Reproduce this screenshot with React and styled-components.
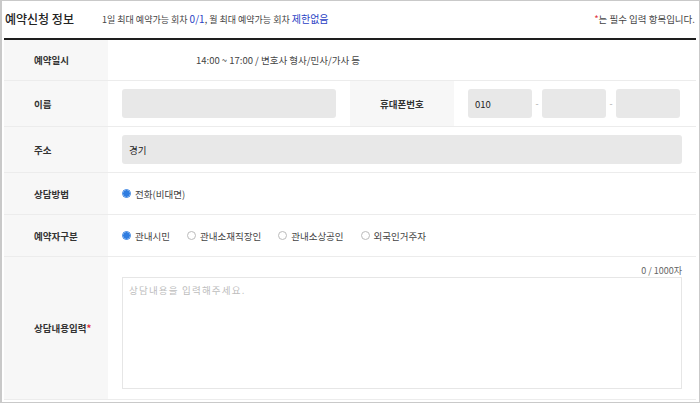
import React from 'react';
import styled, { createGlobalStyle } from 'styled-components';

const GlobalStyle = createGlobalStyle`
  * { box-sizing: border-box; }
  body {
    margin: 0;
    background: #ffffff;
    font-family: 'Noto Sans CJK KR', 'Noto Sans', sans-serif;
    color: #333;
  }
`

const Frame = styled.div`
  width: 700px;
  height: 403px;
  border: 1px solid #c9c9c9;
  border-left-width: 2px;
  padding: 0 3px 2px 2px;
  display: flex;
  flex-direction: column;
  overflow: hidden;
`

const Header = styled.div`
  height: 39px;
  display: flex;
  align-items: center;
  border-bottom: 2px solid #1e1e1e;
  padding: 0 1px 2px 1px;
`

const Title = styled.h2`
  margin: 0;
  font-size: 12px;
  font-weight: 500;
  color: #222;
  width: 97px;
`

const Info = styled.span`
  font-size: 9px;
  color: #444;
  flex: 1;
`

const Blue = styled.span`
  color: #2b3fc4;
  font-size: 10px;
`

const Required = styled.span`
  font-size: 9.5px;
  color: #444;
`

const Star = styled.span`
  color: #e0303a;
`

const Row = styled.div`
  display: grid;
  grid-template-columns: ${(p) => p.$cols || '104px 1fr'};
  height: ${(p) => p.$h}px;
  border-bottom: 1px solid #ececec;
  flex: ${(p) => (p.$grow ? 1 : 'none')};
`

const Label = styled.div`
  background: #f7f7f7;
  display: flex;
  align-items: center;
  padding-left: 30px;
  font-size: 9.5px;
  font-weight: 700;
  color: #333;
`

const Cell = styled.div`
  display: flex;
  align-items: center;
  gap: ${(p) => p.$gap || 0}px;
  padding: 0 14px 0 ${(p) => p.$pl || 14}px;
  font-size: 9.5px;
  color: #444;
`

const Field = styled.div`
  height: 29px;
  width: ${(p) => (p.$w ? `${p.$w}px` : '100%')};
  background: #e8e8e8;
  border-radius: 3px;
  display: flex;
  align-items: center;
  padding-left: 7px;
  font-size: 9.5px;
  color: #222;
`

const Dash = styled.span`
  width: 10px;
  text-align: center;
  color: #aaa;
  font-size: 9px;
`

const Radio = styled.label`
  display: flex;
  align-items: center;
  gap: 4px;
  margin-right: ${(p) => p.$mr || 0}px;
  font-size: 9.5px;
  color: #444;
`

const Dot = styled.span`
  width: 9px;
  height: 9px;
  border-radius: 50%;
  border: 1px solid ${(p) => (p.$on ? '#2f7de1' : '#bbb')};
  background: ${(p) => (p.$on ? 'radial-gradient(circle, #2f7de1 0 3px, #fff 3.5px)' : '#fff')};
`

const TextCol = styled.div`
  display: flex;
  flex-direction: column;
  padding: 8px 14px 10px 14px;
`

const Counter = styled.div`
  text-align: right;
  font-size: 9px;
  color: #666;
  height: 12px;
  line-height: 12px;
`

const TextBox = styled.div`
  flex: 1;
  border: 1px solid #e6e6e6;
  padding: 5px 6px;
  font-size: 9.5px;
  letter-spacing: 1.2px;
  color: #bdbdbd;
`

export default function App() {
  return (
    <>
      <GlobalStyle />
      <Frame>
        <Header>
          <Title>예약신청 정보</Title>
          <Info>
            1일 최대 예약가능 회차 <Blue>0/1</Blue>, 월 최대 예약가능 회차 <Blue>제한없음</Blue>
          </Info>
          <Required><Star>*</Star>는 필수 입력 항목입니다.</Required>
        </Header>

        <Row $h={41}>
          <Label>예약일시</Label>
          <Cell $pl={88}>14:00 ~ 17:00 / 변호사 형사/민사/가사 등</Cell>
        </Row>

        <Row $h={46} $cols="104px 242px 104px 1fr">
          <Label>이름</Label>
          <Cell><Field /></Cell>
          <Label>휴대폰번호</Label>
          <Cell>
            <Field $w={64}>010</Field>
            <Dash>-</Dash>
            <Field $w={64} />
            <Dash>-</Dash>
            <Field $w={64} />
          </Cell>
        </Row>

        <Row $h={46}>
          <Label>주소</Label>
          <Cell><Field>경기</Field></Cell>
        </Row>

        <Row $h={42}>
          <Label>상담방법</Label>
          <Cell>
            <Radio><Dot $on />전화(비대면)</Radio>
          </Cell>
        </Row>

        <Row $h={42}>
          <Label>예약자구분</Label>
          <Cell>
            <Radio $mr={17}><Dot $on />관내시민</Radio>
            <Radio $mr={17}><Dot />관내소재직장인</Radio>
            <Radio $mr={17}><Dot />관내소상공인</Radio>
            <Radio><Dot />외국인거주자</Radio>
          </Cell>
        </Row>

        <Row $grow>
          <Label>상담내용입력<Star>*</Star></Label>
          <TextCol>
            <Counter>0 / 1000자</Counter>
            <TextBox>상담내용을 입력해주세요.</TextBox>
          </TextCol>
        </Row>
      </Frame>
    </>
  );
}
